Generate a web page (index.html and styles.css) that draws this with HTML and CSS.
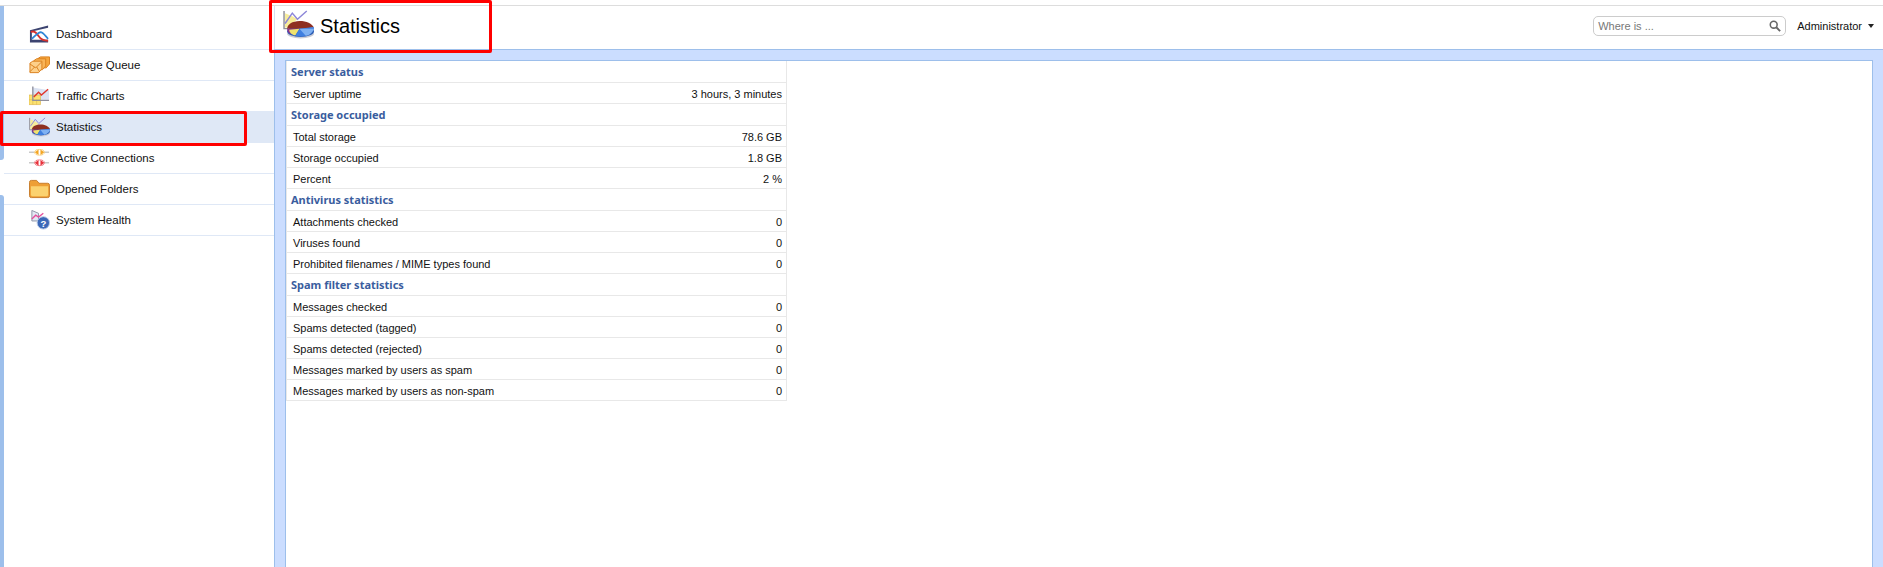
FILE: index.html
```html
<!DOCTYPE html>
<html lang="en">
<head>
    <meta charset="UTF-8">
    <meta name="viewport" content="width=device-width, initial-scale=1.0">
    <title>Statistics</title>
    <link rel="stylesheet" href="styles.css">
</head>
<body>
    <svg class="defs" width="0" height="0">
        <symbol id="pie-chart" viewBox="0 0 30 28">
            <path d="M1 1V18H5" fill="none" stroke="#8f8f96" stroke-width="1.4"/>
            <path d="M2 3L9 6L14 9L4 17H2Z" fill="#f7ec9a"/>
            <path d="M2 13L9 3L14 9L23 1" fill="none" stroke="#8c86d8" stroke-width="1.4"/>
            <ellipse cx="17" cy="23" rx="13" ry="4.500" fill="#c9ccd6"/>
            <ellipse cx="17" cy="20.500" rx="13" ry="5.500" fill="#2f5fb5"/>
            <path d="M16 18L4 18C4 14 9 10.500 16 10.500C23 10.500 28 13 30 17Z" fill="#8e2f22"/>
            <path d="M16 18L4 18C4 20 5 22 7 23Z" fill="#8a2e8c"/>
            <path d="M16 18L6 19C6 21 8 24 12 24.500Z" fill="#efe36e"/>
            <path d="M16 18L12 25C18 26.500 27 25 30 18C30 17.500 30 17 29.500 16.500Z" fill="#3f7fe0"/>
            <path d="M16 18L22 25C26 24 29 21.500 29.800 18Z" fill="#7fb1f2"/>
        </symbol>
    </svg>

    <div class="app">
        <aside class="sidebar">
            <div class="strip">
                <div class="strip-top"></div>
                <div class="strip-bottom"></div>
            </div>
            <nav class="menu">
                <a class="menu-item">
                    <svg class="menu-icon" viewBox="0 0 22 20">
                        <path d="M1 6L20 1V3.500L3 7.500V16H20V19H1Z" fill="#3c4470"/>
                        <path d="M2 8C5 6 8 9 10 12C12 15 15 17 20 17" fill="none" stroke="#d8322c" stroke-width="2"/>
                        <path d="M3 15C6 12 9 9 12 8C15 8 17 12 20 15" fill="none" stroke="#2f86d6" stroke-width="1.800"/>
                    </svg>
                    Dashboard
                </a>
                <a class="menu-item">
                    <svg class="menu-icon" viewBox="0 0 22 20">
                        <path d="M9 3.500L12 1.500H21.500V9L18 13H9Z" fill="#f7a63c" stroke="#d97f1c"/>
                        <path d="M5 5.500L8 3.500H17.500V11L14 15H5Z" fill="#f9b456" stroke="#d97f1c"/>
                        <path d="M1 8L4 6H13.500V14L10 18H1Z" fill="#fdd08a" stroke="#d97f1c"/>
                        <path d="M1 9L7 13L13 7M1 17L6 12M8 12L11 17" fill="none" stroke="#d97f1c"/>
                    </svg>
                    Message Queue
                </a>
                <a class="menu-item">
                    <svg class="menu-icon" viewBox="0 0 22 20">
                        <path d="M4 1L21 4V14H4Z" fill="#dbe2f2"/>
                        <path d="M0 9H12V19H0Z" fill="#fbe271" stroke="#dcb54a" stroke-width=".7"/>
                        <path d="M4 14V19M8 14V19M0 14H12" stroke="#dcb54a" stroke-width=".6"/>
                        <path d="M4 0V14.500H21" fill="none" stroke="#8f8f9c" stroke-width="1.400"/>
                        <path d="M5 11L10 6L13 9L20 3" fill="none" stroke="#e0352b" stroke-width="1.500"/>
                    </svg>
                    Traffic Charts
                </a>
                <a class="menu-item selected">
                    <svg class="menu-icon"><use href="#pie-chart"/></svg>
                    Statistics
                </a>
                <a class="menu-item">
                    <svg class="menu-icon" viewBox="0 0 22 20">
                        <path d="M0 4H6M15 4H21" stroke="#c9c9c9" stroke-width="1.400"/>
                        <path d="M0 15H6M15 15H21" stroke="#c9c9c9" stroke-width="1.400"/>
                        <path d="M6 4L10 1V7ZM16 4L12 1V7Z" fill="#f5a623"/>
                        <ellipse cx="11" cy="4" rx="5" ry="3" fill="none" stroke="#f9cf7f"/>
                        <path d="M6 15L10 12V18ZM16 15L12 12V18Z" fill="#e8313b"/>
                        <ellipse cx="11" cy="15" rx="5" ry="3" fill="none" stroke="#f0717a"/>
                    </svg>
                    Active Connections
                </a>
                <a class="menu-item">
                    <svg class="menu-icon" viewBox="0 0 22 20">
                        <path d="M.5 3Q.5 1 2.500 1H8L10.500 4H19.500Q21.500 4 21.500 6V17Q21.500 19 19.500 19H2.500Q.5 19 .5 17Z" fill="#ee9f35" stroke="#c67c2a"/>
                        <path d="M2 7H20V16Q20 17.500 18.500 17.500H3.500Q2 17.500 2 16Z" fill="#fbd26f"/>
                    </svg>
                    Opened Folders
                </a>
                <a class="menu-item">
                    <svg class="menu-icon" viewBox="0 0 22 20">
                        <path d="M3 0V11H10V3Z" fill="#e3e8f4" stroke="#8e94a6"/>
                        <path d="M3 9L7 5L10 7L15 3" fill="none" stroke="#e4509c" stroke-width="1.400"/>
                        <circle cx="15" cy="13" r="6.500" fill="#3b68b8" stroke="#b8c8e6"/>
                        <text class="help-mark" x="15" y="17">?</text>
                    </svg>
                    System Health
                </a>
            </nav>
        </aside>

        <main class="main">
            <header class="header">
                <div class="page-title">
                    <svg class="title-icon"><use href="#pie-chart"/></svg>
                    <h1>Statistics</h1>
                </div>
                <div class="tools">
                    <div class="search">
                        <span>Where is ...</span>
                        <svg class="search-icon" viewBox="0 0 14 14">
                            <circle cx="5.500" cy="5.500" r="4" fill="none" stroke="#666" stroke-width="1.800"/>
                            <path d="M8.500 8.500L13 13" stroke="#666" stroke-width="2.200"/>
                        </svg>
                    </div>
                    <div class="user">Administrator <span class="caret"></span></div>
                </div>
            </header>
            <section class="panel">
                <div class="panel-body">
                    <table class="stats">
                        <tbody>
                            <tr class="group"><td colspan="2">Server status</td></tr>
                            <tr><td>Server uptime</td><td>3 hours, 3 minutes</td></tr>
                            <tr class="group"><td colspan="2">Storage occupied</td></tr>
                            <tr><td>Total storage</td><td>78.6 GB</td></tr>
                            <tr><td>Storage occupied</td><td>1.8 GB</td></tr>
                            <tr><td>Percent</td><td>2 %</td></tr>
                            <tr class="group"><td colspan="2">Antivirus statistics</td></tr>
                            <tr><td>Attachments checked</td><td>0</td></tr>
                            <tr><td>Viruses found</td><td>0</td></tr>
                            <tr><td>Prohibited filenames / MIME types found</td><td>0</td></tr>
                            <tr class="group"><td colspan="2">Spam filter statistics</td></tr>
                            <tr><td>Messages checked</td><td>0</td></tr>
                            <tr><td>Spams detected (tagged)</td><td>0</td></tr>
                            <tr><td>Spams detected (rejected)</td><td>0</td></tr>
                            <tr><td>Messages marked by users as spam</td><td>0</td></tr>
                            <tr><td>Messages marked by users as non-spam</td><td>0</td></tr>
                        </tbody>
                    </table>
                </div>
            </section>
        </main>
    </div>

    <div class="mark mark-title"></div>
    <div class="mark mark-menu"></div>
</body>
</html>
```

FILE: styles.css
```css
* {
    box-sizing: border-box;
}
html, body {
    height: 100%;
}
body {
    margin: 0;
    padding-top: 5px;
    overflow: hidden;
    position: relative;
    background-color: #fff;
    color: #111;
    font-family: "Liberation Sans", Arial, sans-serif;
    font-size: 11px;
}
.defs {
    position: absolute;
}
.app {
    display: flex;
    height: 100%;
    border-top: 1px solid #ddd;
}

/* left menu */
.sidebar {
    display: flex;
    flex: 0 0 274px;
}
.strip {
    display: flex;
    flex: 0 0 4px;
    flex-direction: column;
    justify-content: space-between;
}
.strip-top, .strip-bottom {
    background-color: #9dbfeb;
}
.strip-top {
    height: 154px;
    border-bottom-right-radius: 3px;
}
.strip-bottom {
    flex: 1;
    margin-top: 35px;
    border-top-right-radius: 3px;
}
.menu {
    flex: 1;
    padding-top: 13px;
    font-size: 11.5px;
}
.menu-item {
    display: flex;
    align-items: center;
    gap: 6px;
    height: 31px;
    padding-left: 25px;
    border-bottom: 1px solid #dfe8f6;
}
.menu-item.selected {
    background-color: #dfe8f6;
}
.menu-icon {
    width: 21px;
    height: 20px;
}
.help-mark {
    fill: #fff;
    font-size: 10px;
    font-weight: bold;
    text-anchor: middle;
}

/* header */
.main {
    display: flex;
    flex: 1;
    flex-direction: column;
    min-width: 0;
}
.header {
    display: flex;
    flex: 0 0 43px;
    align-items: flex-start;
    justify-content: space-between;
    padding-right: 9px;
    border-left: 1px solid #d5e0f0;
}
.page-title {
    display: flex;
    align-items: center;
    gap: 6px;
    padding: 4px 0 0 8px;
}
.page-title h1 {
    margin: 4px 0 0;
    font-size: 20px;
    font-weight: normal;
    color: #000;
}
.title-icon {
    width: 31px;
    height: 29px;
}
.tools {
    display: flex;
    align-items: center;
    gap: 11px;
    padding-top: 10px;
}
.search {
    display: flex;
    align-items: center;
    justify-content: space-between;
    width: 193px;
    height: 20px;
    padding: 0 4px;
    border: 1px solid #ccc;
    border-radius: 5px;
    color: #777;
}
.search-icon {
    width: 12px;
    height: 12px;
}
.user {
    display: flex;
    align-items: center;
    gap: 6px;
}
.caret {
    border-top: 4px solid #222;
    border-left: 3px solid transparent;
    border-right: 3px solid transparent;
}

/* content */
.panel {
    flex: 1;
    padding: 10px 10px 0;
    background-color: #cbddff;
    border-top: 1px solid #9dbfeb;
    border-left: 1px solid #9dbfeb;
}
.panel-body {
    height: 100%;
    background-color: #fff;
    border: 1px solid #9dbfeb;
    border-bottom: none;
}
.stats {
    width: 501px;
    border-spacing: 0;
    border-left: 1px solid #e8e8e8;
    border-right: 1px solid #e8e8e8;
}
.stats td {
    height: 21px;
    padding: 2px 4px 0 6px;
    border-bottom: 1px solid #e8e8e8;
    line-height: 1;
}
.stats td:last-child {
    text-align: right;
}
.stats .group td {
    height: 22px;
    padding: 0 0 0 4px;
    color: #3a5d9e;
    font-family: "Noto Sans", Arial, sans-serif;
    font-size: 11px;
    font-weight: bold;
    text-align: left;
}

/* red annotations drawn over the screenshot */
.mark {
    position: absolute;
    border: 3px solid #ff0000;
    border-radius: 2px;
}
.mark-title {
    left: 269px;
    top: 0;
    width: 223px;
    height: 53px;
}
.mark-menu {
    left: 0;
    top: 111px;
    width: 247px;
    height: 35px;
}
```
